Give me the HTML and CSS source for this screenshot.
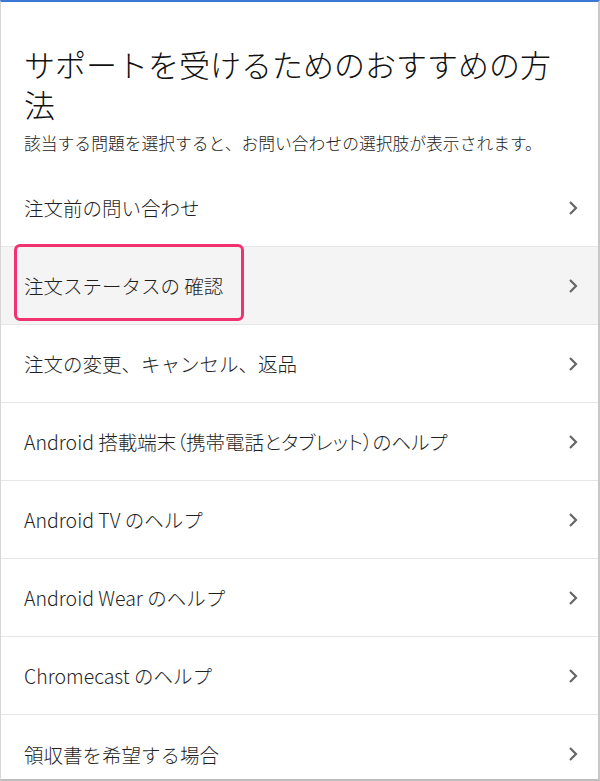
FILE: index.html
```html
<!DOCTYPE html>
<html lang="ja">
<head>
<meta charset="utf-8">
<link rel="stylesheet" href="styles.css">
</head>
<body>
<div class="frame">
  <header class="head">
    <h1 class="title">サポートを受けるためのおすすめの方法</h1>
    <p class="sub">該当する問題を選択すると、お問い合わせの選択肢が表示されます。</p>
  </header>
  <ul class="list">
    <li class="row"><span class="label">注文前の問い合わせ</span><svg class="chev" viewBox="0 0 10 16"><path d="M2 2l6 6-6 6"/></svg></li>
    <li class="row row-hl"><span class="label">注文ステータスの 確認</span><svg class="chev" viewBox="0 0 10 16"><path d="M2 2l6 6-6 6"/></svg><span class="mark"></span></li>
    <li class="row"><span class="label">注文の変更、キャンセル、返品</span><svg class="chev" viewBox="0 0 10 16"><path d="M2 2l6 6-6 6"/></svg></li>
    <li class="row"><span class="label label-prop">Android 搭載端末（携帯電話とタブレット）のヘルプ</span><svg class="chev" viewBox="0 0 10 16"><path d="M2 2l6 6-6 6"/></svg></li>
    <li class="row"><span class="label">Android TV のヘルプ</span><svg class="chev" viewBox="0 0 10 16"><path d="M2 2l6 6-6 6"/></svg></li>
    <li class="row"><span class="label">Android Wear のヘルプ</span><svg class="chev" viewBox="0 0 10 16"><path d="M2 2l6 6-6 6"/></svg></li>
    <li class="row"><span class="label">Chromecast のヘルプ</span><svg class="chev" viewBox="0 0 10 16"><path d="M2 2l6 6-6 6"/></svg></li>
    <li class="row"><span class="label">領収書を希望する場合</span><svg class="chev" viewBox="0 0 10 16"><path d="M2 2l6 6-6 6"/></svg></li>
  </ul>
</div>
</body>
</html>
```

FILE: styles.css
```css
html, body {
  margin: 0;
  padding: 0;
  background: #ffffff;
}
body {
  font-family: "Noto Sans CJK JP", "Noto Sans", sans-serif;
  color: #222;
}
.frame {
  box-sizing: border-box;
  width: 600px;
  height: 781px;
  border-top: 2px solid #3b78d6;
  border-left: 1px solid #d6d6d6;
  border-right: 2px solid #c8c8c8;
  border-bottom: 2px solid #bdbdbd;
  overflow: hidden;
}
.head {
  padding: 42px 0 0 23px;
}
.title {
  margin: 0;
  font-size: 31px;
  font-weight: 300;
  line-height: 40px;
  color: #111;
  width: 540px;
}
.sub {
  margin: 0;
  font-size: 16.8px;
  font-weight: 300;
  line-height: 38px;
  height: 38px;
  color: #1a1a1a;
  white-space: nowrap;
}
.list {
  list-style: none;
  margin: 7px 0 0 0;
  padding: 0;
}
.row {
  position: relative;
  box-sizing: border-box;
  height: 78px;
  display: flex;
  align-items: center;
  justify-content: space-between;
  padding: 0 20px 0 23px;
  border-bottom: 1px solid #e6e6e6;
}
.row:last-child {
  border-bottom: none;
}
.row-hl {
  background: #f4f4f4;
}
.label {
  font-size: 19.5px;
  font-weight: 300;
  color: #1f1f1f;
  white-space: nowrap;
}
.label-prop {
  font-feature-settings: "palt";
}
.chev {
  width: 10px;
  height: 16px;
  fill: none;
  stroke: #666;
  stroke-width: 2.2;
}
.mark {
  position: absolute;
  left: 13px;
  top: -3px;
  width: 224px;
  height: 71px;
  border: 3px solid #f0336f;
  border-radius: 6px;
}
```
